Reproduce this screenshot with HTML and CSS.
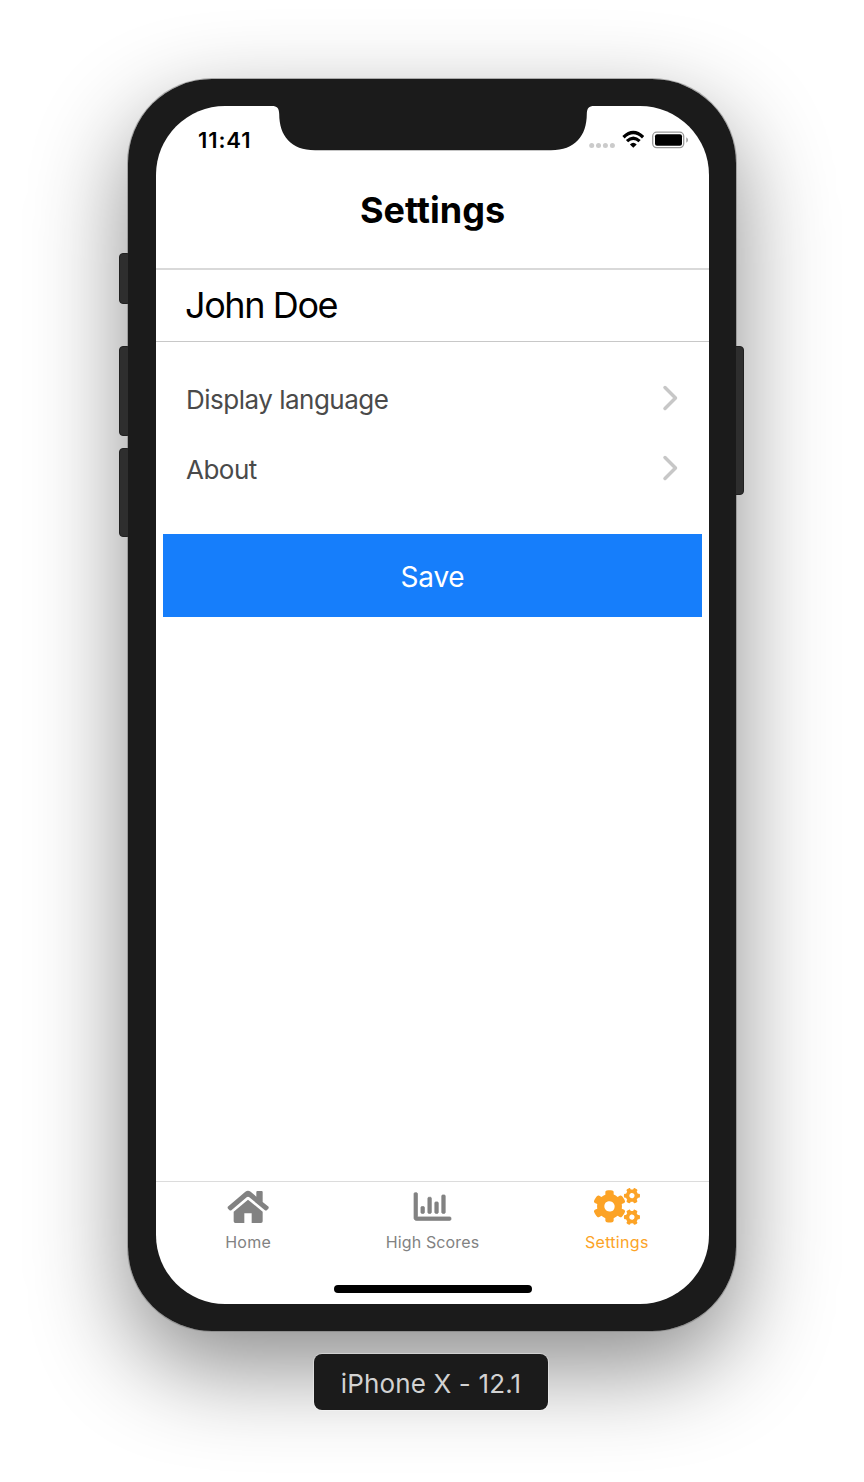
FILE: index.html
```html
<!DOCTYPE html>
<html lang="en">
<head>
<meta charset="utf-8">
<title>Settings</title>
<link rel="stylesheet" href="styles.css">
</head>
<body>
<div class="stage">
  <div class="phone">
    <span class="key key-mute"></span>
    <span class="key key-up"></span>
    <span class="key key-down"></span>
    <span class="key key-power"></span>
    <div class="bezel">
    <main class="screen">
      <svg class="notch" viewBox="0 0 322 45" aria-hidden="true"><path d="M0 0C5 0 7 2 7.200 8C7.300 30 19 44.200 43 44.200H279C303 44.200 314.700 30 314.800 8C315 2 317 0 322 0Z"/></svg>
      <div class="status">
        <span class="clock">11:41</span>
        <svg class="indicators" viewBox="0 0 100 20" aria-hidden="true">
          <g fill="#cbcbcb"><circle cx="3.700" cy="15.500" r="2.500"/><circle cx="10.500" cy="15.500" r="2.500"/><circle cx="17.400" cy="15.500" r="2.500"/><circle cx="24.400" cy="15.500" r="2.500"/></g>
          <g fill="none" stroke="#000"><path stroke-width="3.300" d="M35.500 7.200Q45.300-2 55.100 7.200"/><path stroke-width="3.200" d="M39 11.200Q45.300 5.200 51.600 11.200"/></g>
          <path d="M41.900 14.400Q45.300 11.300 48.700 14.400L45.300 17.800Z"/>
          <rect x="64.700" y="2.200" width="31" height="15.400" rx="4" fill="none" stroke="#999" stroke-width="1.300"/>
          <rect x="67" y="4.200" width="27" height="11.500" rx="2"/>
          <path d="M98.300 7.200Q100 8.200 100 10Q100 11.700 98.300 12.700Z" fill="#999"/>
        </svg>
      </div>
      <h1 class="title">Settings</h1>
      <div class="name">John Doe</div>
      <div class="menu">
        <div class="row"><span>Display language</span><svg class="chevron" viewBox="0 0 16 26"><path d="M3 2.500L13.500 13L3 23.500"/></svg></div>
        <div class="row"><span>About</span><svg class="chevron" viewBox="0 0 16 26"><path d="M3 2.500L13.500 13L3 23.500"/></svg></div>
      </div>
      <button class="save">Save</button>
      <nav class="tabs">
        <div class="tab">
          <svg class="home-icon" viewBox="51 60 126 102"><path d="M55 109L106 65Q114 59 122 65L139 80V66Q139 63 142 63H155Q158 63 158 66V96L174 109Q178 112 175 116L171 120Q168 123 164 120L118 82Q114 79 110 82L65 120Q61 123 58 120L54 116Q51 112 55 109ZM114 89L158 125V154Q158 159 153 159H125V130H103V159H76Q71 159 71 154V125Z"/></svg>
          <span>Home</span>
        </div>
        <div class="tab scores">
          <svg class="chart-icon" viewBox="0 0 512 512"><path stroke="currentColor" stroke-width="10" d="M396.800 352h22.400c6.400 0 12.800-6.400 12.800-12.800V108.800c0-6.400-6.400-12.800-12.800-12.800h-22.400c-6.400 0-12.800 6.400-12.800 12.800v230.400c0 6.400 6.400 12.800 12.800 12.800zm-192 0h22.400c6.400 0 12.800-6.400 12.800-12.800V140.800c0-6.400-6.400-12.800-12.800-12.800h-22.400c-6.400 0-12.800 6.400-12.800 12.800v198.400c0 6.400 6.400 12.800 12.800 12.800zm96 0h22.400c6.400 0 12.800-6.400 12.800-12.800V204.800c0-6.400-6.400-12.800-12.800-12.800h-22.400c-6.400 0-12.800 6.400-12.800 12.800v134.400c0 6.400 6.400 12.800 12.800 12.800zM496 400H48V80c0-8.840-7.160-16-16-16H16C7.160 64 0 71.160 0 80v336c0 17.670 14.330 32 32 32h464c8.840 0 16-7.160 16-16v-16c0-8.840-7.160-16-16-16zm-387.200-48h22.400c6.400 0 12.800-6.400 12.800-12.800v-70.400c0-6.400-6.400-12.800-12.800-12.800h-22.400c-6.400 0-12.800 6.400-12.800 12.800v70.400c0 6.400 6.400 12.800 12.800 12.800z"/></svg>
          <span>High Scores</span>
        </div>
        <div class="tab active">
          <svg class="cogs-icon" viewBox="0 0 640 512">
            <defs><path id="cog" d="M512.100 191l-8.200 14.300c-3 5.300-9.400 7.500-15.100 5.400-11.800-4.400-22.600-10.700-32.100-18.600-4.600-3.800-5.800-10.500-2.800-15.700l8.200-14.300c-6.900-8-12.300-17.300-15.900-27.400h-16.500c-6 0-11.200-4.300-12.200-10.300-2-12-2.100-24.600 0-37.100 1-6 6.200-10.400 12.200-10.400h16.500c3.600-10.100 9-19.400 15.900-27.400l-8.200-14.300c-3-5.200-1.900-11.900 2.800-15.700 9.500-7.900 20.400-14.200 32.100-18.600 5.700-2.100 12.100.1 15.100 5.400l8.200 14.300c10.500-1.900 21.200-1.900 31.700 0L552 6.300c3-5.300 9.400-7.500 15.100-5.400 11.800 4.400 22.600 10.700 32.100 18.600 4.600 3.800 5.800 10.500 2.800 15.700l-8.200 14.300c6.900 8 12.300 17.300 15.900 27.400h16.500c6 0 11.200 4.300 12.200 10.300 2 12 2.100 24.600 0 37.100-1 6-6.200 10.400-12.200 10.400h-16.500c-3.600 10.100-9 19.400-15.900 27.400l8.200 14.300c3 5.200 1.900 11.900-2.800 15.700-9.500 7.900-20.400 14.200-32.100 18.600-5.700 2.100-12.100-.1-15.100-5.400l-8.200-14.300c-10.400 1.900-21.200 1.900-31.700 0zm-10.500-58.800c38.500 29.600 82.400-14.300 52.800-52.800-38.500-29.700-82.400 14.300-52.800 52.800z"/></defs>
            <use href="#cog"/><use href="#cog" y="298.900"/>
            <path d="M386.300 286.100l33.700 16.800c10.100 5.800 14.500 18.100 10.500 29.100-8.900 24.200-26.400 46.400-42.600 65.800-7.400 8.900-20.200 11.100-30.300 5.300l-29.100-16.800c-16 13.700-34.600 24.600-54.900 31.700v33.600c0 11.600-8.300 21.600-19.700 23.600-24.600 4.200-50.400 4.400-75.900 0-11.500-2-20-11.900-20-23.600V418c-20.300-7.200-38.900-18-54.900-31.700L74 403c-10 5.800-22.900 3.600-30.300-5.300-16.200-19.400-33.300-41.600-42.200-65.700-4-10.900.4-23.200 10.500-29.100l33.300-16.800c-3.900-20.900-3.900-42.400 0-63.400L12 205.800c-10.100-5.800-14.600-18.100-10.500-29 8.900-24.200 26-46.400 42.200-65.800 7.400-8.900 20.200-11.100 30.300-5.300l29.100 16.800c16-13.700 34.600-24.600 54.900-31.700V57.100c0-11.500 8.200-21.500 19.600-23.500 24.600-4.200 50.500-4.400 76-.1 11.500 2 20 11.900 20 23.600v33.600c20.300 7.200 38.900 18 54.900 31.700l29.100-16.800c10-5.800 22.900-3.600 30.300 5.300 16.200 19.400 33.200 41.600 42.100 65.800 4 10.900.1 23.200-10 29.100l-33.700 16.800c3.900 21 3.900 42.500 0 63.500zm-117.600 21.100c59.200-77-28.700-164.900-105.700-105.700-59.200 77 28.700 164.900 105.700 105.700z"/>
          </svg>
          <span>Settings</span>
        </div>
      </nav>
      <div class="home-bar"></div>
    </main>
    </div>
  </div>
  <div class="device-label">iPhone X - 12.1</div>
</div>
</body>
</html>
```

FILE: styles.css
```css
* { box-sizing: border-box; }
body { margin: 0; background: #fff; font-family: Inter, Roboto, sans-serif; }
.stage { height: 1482px; padding-top: 79px; overflow: hidden; display: flex; flex-direction: column; align-items: center; }
.phone { position: relative; width: 608px; height: 1252px; flex: none; border-radius: 84px; box-shadow: 0 0 0 1px rgba(120,120,120,.55), 0 36px 96px rgba(0,0,0,.46); }
.bezel { position: relative; height: 100%; padding: 27px 27px 27px 28px; background: #1b1b1b; border-radius: 84px; }
.screen { position: relative; height: 1198px; background: #fff; border-radius: 69px; overflow: hidden; display: flex; flex-direction: column; }
.key { position: absolute; background: #2e2e2e; border: 1px solid #202020; width: 12px; left: -9px; border-radius: 4px; }
.key-mute { top: 174px; height: 51px; }
.key-up { top: 267px; height: 90px; }
.key-down { top: 369px; height: 89px; }
.key-power { left: auto; right: -8px; top: 267px; height: 149px; }
.notch { position: absolute; top: 0; left: 116px; width: 322px; height: 45px; fill: #1b1b1b; }
.status { height: 64px; flex: none; display: flex; justify-content: space-between; padding: 24px 21px 0 42px; }
.clock { font-size: 22px; line-height: 20px; font-weight: 600; letter-spacing: .9px; }
.indicators { width: 100px; height: 20px; }
.title { margin: 0; height: 98px; flex: none; font-size: 36px; line-height: 80px; font-weight: 700; text-align: center; letter-spacing: 0; font-variant-ligatures: none; }
.name { height: 74px; flex: none; border-top: 2px solid #d9d9d9; border-bottom: 1px solid #c8c8c8; padding-left: 29px; font-size: 36px; line-height: 71px; letter-spacing: -1.400px; }
.menu { padding: 22px 30px 0; height: 192px; flex: none; }
.row { display: flex; justify-content: space-between; align-items: center; height: 70px; color: #4a4a4a; font-size: 26px; letter-spacing: -.5px; }
.chevron { width: 16px; height: 26px; margin: -3px 1px 0 0; fill: none; stroke: #c7c7c7; stroke-width: 3.500; stroke-linecap: round; stroke-linejoin: round; }
.save { margin: 0 7px; height: 83px; flex: none; border: 0; padding: 3px 0 0; background: #167efb; color: #fff; font-family: inherit; font-size: 28px; line-height: 80px; letter-spacing: -.2px; }
.tabs { margin-top: auto; height: 82px; flex: none; display: grid; grid-template-columns: repeat(3, 1fr); border-top: 1px solid #dcdcdc; }
.tab { display: flex; flex-direction: column; align-items: center; padding-top: 6px; color: #828282; font-size: 16px; line-height: 20px; letter-spacing: .3px; }
.scores { letter-spacing: .15px; }
.tab svg { height: 37px; fill: currentColor; margin-bottom: 7px; overflow: visible; }
.tab .home-icon { width: 42px; height: 34px; margin: 2px 0 8px; }
.tab .chart-icon { width: 37px; }
.tab .cogs-icon { width: 46px; }
.tab.active { color: #fca326; }
.home-bar { width: 198px; height: 8px; flex: none; margin: 22px auto 11px; border-radius: 4px; background: #000; }
.device-label { position: relative; width: 234px; height: 56px; flex: none; margin: 23px 2px 0 0; border-radius: 8px; background: #1b1b1b; box-shadow: 0 0 0 1px rgba(255,255,255,.35); color: #d2d2d2; font-size: 26px; line-height: 59px; text-align: center; letter-spacing: .15px; }
```
